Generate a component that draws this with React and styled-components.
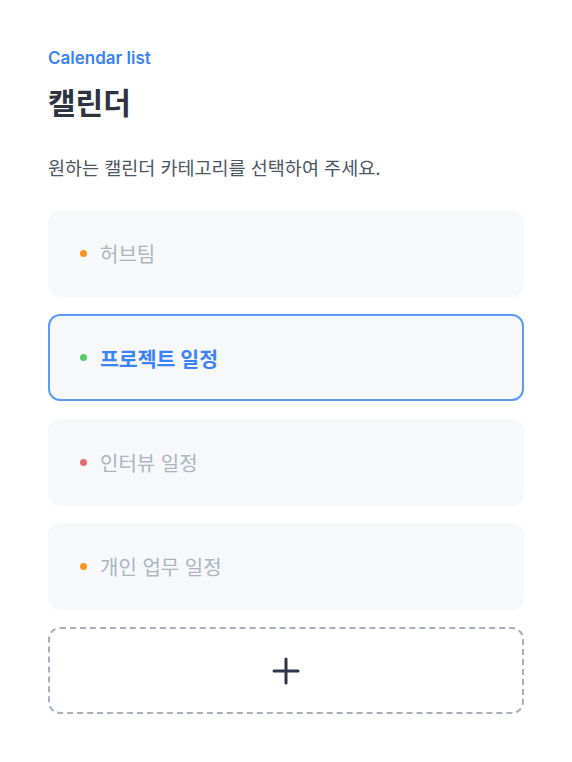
import styled, { createGlobalStyle } from 'styled-components';

const GlobalStyle = createGlobalStyle`
  body {
    margin: 0;
    background: #ffffff;
    font-family: Inter, "Noto Sans CJK KR", sans-serif;
  }
`;

const Page = styled.div`
  display: flex;
  flex-direction: column;
  padding: 46px 48px 48px;
`;

const Eyebrow = styled.div`
  font-size: 17px;
  line-height: 24px;
  font-weight: 600;
  color: #3b82f6;
`;

const Title = styled.h1`
  margin: 14px 0 0;
  font-size: 30px;
  line-height: 38px;
  font-weight: 700;
  color: #2d3340;
`;

const Subtitle = styled.p`
  margin: 33px 0 0;
  font-size: 18.5px;
  line-height: 26px;
  color: #4b5563;
`;

const List = styled.div`
  display: flex;
  flex-direction: column;
  gap: 17.3px;
  margin-top: 29px;
`;

const Item = styled.button`
  display: flex;
  align-items: center;
  gap: 13px;
  height: 87px;
  padding: 0 30px;
  border-radius: 12px;
  border: 2px solid ${(p) => (p.$active ? '#5b9bf6' : '#f7f8fa')};
  background: #f7f8fa;
  font-family: inherit;
  font-size: ${(p) => (p.$active ? '20.5px' : '20px')};
  font-weight: ${(p) => (p.$active ? 700 : 400)};
  color: ${(p) => (p.$active ? '#3b82f6' : '#adb4be')};
  text-align: left;
  cursor: pointer;
`;

const Dot = styled.span`
  width: 7px;
  height: 7px;
  border-radius: 50%;
  background: ${(p) => p.$color};
  flex-shrink: 0;
`;

const AddButton = styled.button`
  display: flex;
  align-items: center;
  justify-content: center;
  height: 87px;
  border: 2px dashed #a9b0ba;
  border-radius: 12px;
  background: #ffffff;
  cursor: pointer;
`;

const calendars = [
  { name: '허브팀', color: '#f7931e' },
  { name: '프로젝트 일정', color: '#5cc96b', active: true },
  { name: '인터뷰 일정', color: '#e46b72' },
  { name: '개인 업무 일정', color: '#f7931e' },
];

export default function App() {
  return (
    <>
      <GlobalStyle />
      <Page>
        <Eyebrow>Calendar list</Eyebrow>
        <Title>캘린더</Title>
        <Subtitle>원하는 캘린더 카테고리를 선택하여 주세요.</Subtitle>
        <List>
          {calendars.map((c) => (
            <Item key={c.name} $active={c.active}>
              <Dot $color={c.color} />
              {c.name}
            </Item>
          ))}
          <AddButton aria-label="캘린더 추가">
            <svg width="28" height="28" viewBox="0 0 28 28" fill="none">
              <path d="M14 2v24M2 14h24" stroke="#2d3748" strokeWidth="3" strokeLinecap="round" />
            </svg>
          </AddButton>
        </List>
      </Page>
    </>
  );
}
